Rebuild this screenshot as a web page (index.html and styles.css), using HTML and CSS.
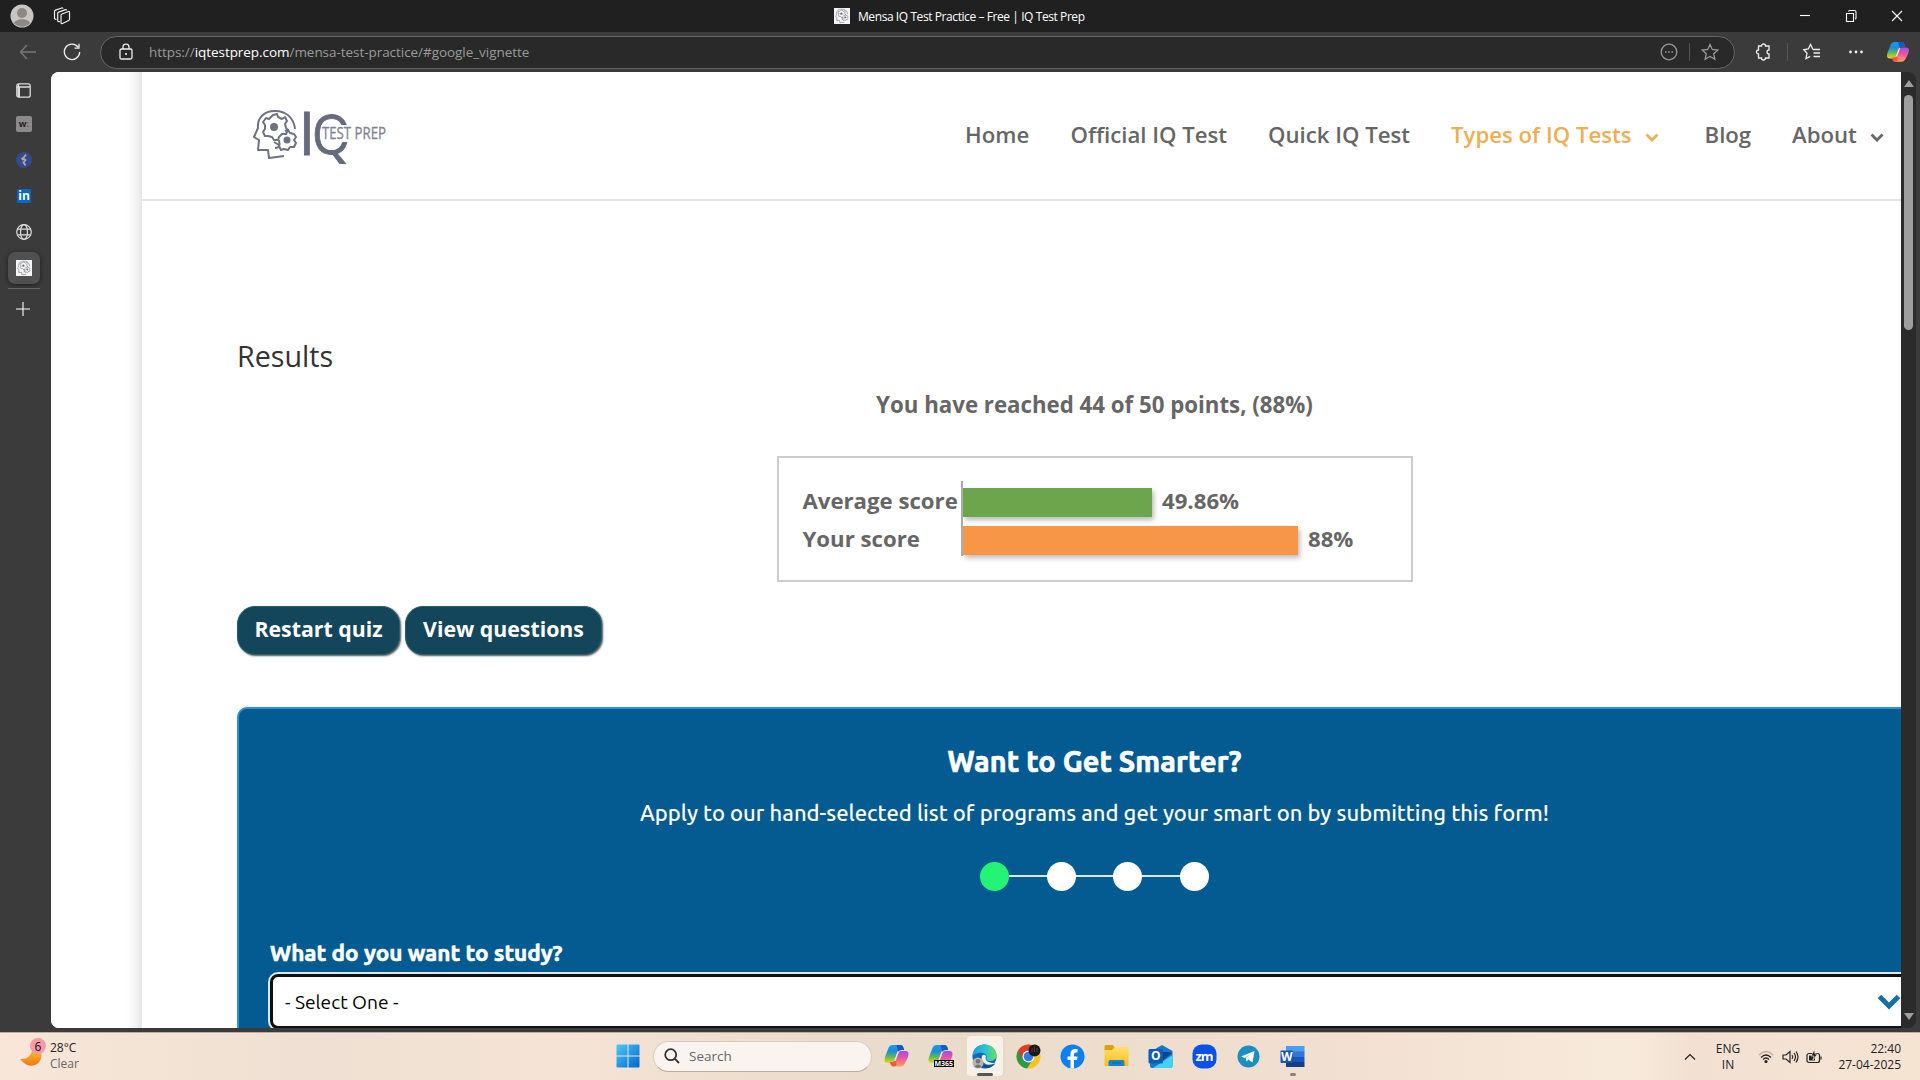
FILE: index.html
```html
<!DOCTYPE html>
<html lang="en">
<head>
<meta charset="utf-8">
<title>Mensa IQ Test Practice – Free | IQ Test Prep</title>
<link rel="stylesheet" href="styles.css">
</head>
<body>
<svg class="defs" aria-hidden="true">
  <defs>
    <linearGradient id="cpBlue" x1="0" y1="0" x2="0" y2="1"><stop offset="0" stop-color="#1a9af0"/><stop offset=".35" stop-color="#1e8bd8"/><stop offset=".65" stop-color="#5cb85a"/><stop offset="1" stop-color="#f5d313"/></linearGradient>
    <linearGradient id="cpPink" x1="0" y1="0" x2="0" y2="1"><stop offset="0" stop-color="#a04be8"/><stop offset=".5" stop-color="#f0589a"/><stop offset="1" stop-color="#fda05a"/></linearGradient>
    <linearGradient id="winBlue" x1="0" y1="0" x2="1" y2="1"><stop offset="0" stop-color="#4cc8f8"/><stop offset="1" stop-color="#0067cf"/></linearGradient>
    <linearGradient id="edgeTop" x1="0" y1="0" x2="1" y2="0"><stop offset="0" stop-color="#249be0"/><stop offset=".55" stop-color="#2cc3d5"/><stop offset="1" stop-color="#6be05a"/></linearGradient>
    <linearGradient id="moon" x1="0" y1="0" x2="0" y2="1"><stop offset="0" stop-color="#f7bd35"/><stop offset="1" stop-color="#ec7619"/></linearGradient>
    <linearGradient id="folder" x1="0" y1="0" x2="0" y2="1"><stop offset="0" stop-color="#ffe06a"/><stop offset="1" stop-color="#fbbc1d"/></linearGradient>
    <symbol id="copilot" viewBox="0 0 24 24">
      <path d="M8 1h8q2 0 2.700 2l1 3h-3.200q-2 0-2.700 2l-3 9q-.7 2-2.700 2H3q-3 0-3-3 0-1 .5-3L4 4q1-3 4-3z" fill="url(#cpBlue)"/>
      <path d="M12 1h4q2 0 2.700 2l1 3h-3.200q-2 0-2.700 2z" fill="#1559c7"/>
      <path d="M16.500 7H21q3 0 3 3 0 1-.5 3L20 20q-1 2.500-4 2.500H9q-2 0-2.700-2L5.600 18H8q2 0 2.700-2l3-7q.8-2 2.800-2z" fill="url(#cpPink)"/>
      <path d="M5.600 18H8q2 0 2.700-2l1.300 5-2 1.500H9q-2 0-2.700-2z" fill="#ee5a3b"/>
      <path d="M13.800 7.500L10.300 17" stroke="#f3e6dc" stroke-width="1.500" fill="none"/>
    </symbol>
    <symbol id="head" viewBox="0 0 46 50">
      <g fill="none" stroke="currentColor" stroke-width="2" stroke-linejoin="round">
        <path d="M31 46l-15 2-1-8H5l1-10-5-3 4-9C4 8 11 1 22 1c11 0 19 7 20 18"/>
        <path d="M20 5l4-1 1 3 4 2 3-2 2 4-2 3 1 4 2 2-2 4-4 0-3 3-1 3h-4l-2-3-4-1-3 0-2-4 2-3 0-4-2-3 3-4 3 1z"/>
        <path d="M32 21l3-1 2 3 4 1 2 3-2 3 2 3-2 4-4 0-2 3-4-1-3 1-2-4M22 38c5 0 5-3 4-8M21 32l5 3"/>
      </g>
      <circle cx="21" cy="17" r="4" fill="currentColor"/><circle cx="34" cy="30" r="3.500" fill="currentColor"/>
    </symbol>
  </defs>
</svg>

<header class="titlebar">
  <svg class="avatar" width="24" height="24" viewBox="0 0 24 24"><circle cx="12" cy="12" r="11.500" fill="#c9c6c2"/><circle cx="12" cy="9" r="5" fill="#8b8885"/><path d="M4 19c2-5 14-5 16 0-4 5-12 5-16 0z" fill="#8b8885"/></svg>
  <svg class="spaces" width="18" height="18" viewBox="0 0 18 18" fill="none" stroke="#eee" stroke-width="1.200" stroke-linejoin="round"><path d="M9 7l6.500-2.500q1-.3 1 .8v7q0 .8-.8 1.200L9.500 16.500Q8 17 8 15.600V8.400Q8 7.400 9 7zM7 14.500Q4.700 15 4.700 13.500V6.500q0-1 1-1.400L12.500 2.600q1-.3 1.200.8M3.500 12.300Q1.500 12.500 1.500 11V4.500q0-1 1-1.400L8.700 1q1-.2 1.200.7"/></svg>
  <div class="tab-title"><svg class="favicon" width="16" height="16" viewBox="-2 -2 50 54"><use href="#head" width="46" height="50"/></svg><span>Mensa IQ Test Practice – Free | IQ Test Prep</span></div>
  <div class="window-buttons">
    <svg width="12" height="12" viewBox="0 0 12 12"><path d="M1 5.500h10"/></svg>
    <svg width="12" height="12" viewBox="0 0 12 12"><path d="M1.500 3.500h7v8h-7zM3.500 1.500q0-1 1-1h5q1.500 0 1.500 1.500v6q0 1-1 1"/></svg>
    <svg width="12" height="12" viewBox="0 0 12 12"><path d="M1 1l10 10M11 1L1 11"/></svg>
  </div>
</header>

<div class="toolbar">
  <svg class="back" width="18" height="16" viewBox="0 0 18 16"><path d="M16 8H.5M7 1L.5 8 7 15"/></svg>
  <svg class="reload" width="18" height="18" viewBox="0 0 18 18"><path d="M15 4A7.700 7.700 0 1 0 16.700 9M16 .8v4.400h-4.500"/></svg>
  <div class="address">
    <svg class="lock" width="14" height="18" viewBox="0 0 14 18"><path d="M2.500 6h9q1.500 0 1.500 1.500v7q0 1.500-1.500 1.500h-9Q1 16 1 14.500v-7Q1 6 2.500 6zM4 6V4q0-2.900 3-2.900T10 4v2"/><circle cx="7" cy="11" r="1" fill="#fff" stroke="none"/></svg>
    <span class="url">https://<b>iqtestprep.com</b>/mensa-test-practice/#google_vignette</span>
    <svg class="more" width="18" height="18" viewBox="0 0 18 18"><circle cx="9" cy="9" r="7.800"/><path d="M5 9h1.600M8.200 9h1.600M11.400 9H13" stroke-width="1.600"/></svg>
    <i class="divider"></i>
    <svg width="18" height="18" viewBox="0 0 18 18"><path d="M9 1.500l2.300 5 5.500.6-4.100 3.700 1.200 5.500L9 13.500l-4.900 2.800 1.200-5.500L1.200 7.100l5.500-.6z"/></svg>
  </div>
  <svg class="ext" width="18" height="18" viewBox="0 0 18 18"><path d="M5 3h2.500a2 2 0 0 1 4 0H15v4a2 2 0 0 0 0 4v4h-3.500a2 2 0 0 1-4 0H4.500v-4a2 2 0 0 1 0-4V3z"/></svg>
  <i class="divider dim"></i>
  <svg class="favs" width="18" height="18" viewBox="0 0 18 18"><path d="M10 6.500L7.500 1.500 5.300 6l-4.500.8 3.200 3.500-1 5.200 4.200-2.200M10 6.500h7M10.500 10H17M10.500 13.500H17"/></svg>
  <svg class="dots" width="16" height="4" viewBox="0 0 16 4"><circle cx="2.500" cy="2" r="1.400"/><circle cx="8" cy="2" r="1.400"/><circle cx="13.500" cy="2" r="1.400"/></svg>
  <svg class="cp" width="22" height="22"><use href="#copilot"/></svg>
</div>

<main class="frame">
  <aside class="rail">
    <div class="slot first"><svg width="15" height="15" viewBox="0 0 15 15"><rect x=".8" y=".8" width="13.400" height="13.400" rx="2" fill="none" stroke="#ddd" stroke-width="1.300"/><path d="M.8 4H14M2.500 1v13" stroke="#ddd" stroke-width="1.300"/><path d="M1.500 4h2.500v10H1.500z" fill="#ddd"/></svg></div>
    <div class="slot"><span class="w-tile">w<em>:</em></span></div>
    <div class="slot"><svg width="16" height="16" viewBox="0 0 16 16"><circle cx="8" cy="8" r="8" fill="#35498c"/><path d="M10 2.500L7 6.500l2.500 1.500-2 2.500 2 3M5.500 6l2 2" fill="none" stroke="#aaa9a6" stroke-width="1.800"/></svg></div>
    <div class="slot"><span class="in-tile">in</span></div>
    <div class="slot"><svg width="16" height="16" viewBox="0 0 16 16" fill="none" stroke="#ddd" stroke-width="1.200"><circle cx="8" cy="8" r="7.300"/><ellipse cx="8" cy="8" rx="3.500" ry="7.300"/><path d="M1.500 5.200h13M1.500 10.800h13"/></svg></div>
    <div class="slot"><div class="active"><svg class="favicon" width="16" height="16" viewBox="-2 -2 50 54"><use href="#head" width="46" height="50"/></svg></div></div>
    <i class="rail-line"></i>
    <svg class="plus" width="16" height="16" viewBox="0 0 16 16"><path d="M8 1v14M1 8h14"/></svg>
  </aside>

  <div class="viewport">
    <div class="gutter"></div>
    <div class="page">
      <div class="site-header">
        <svg class="logo" width="140" height="62" viewBox="0 0 140 62">
          <use href="#head" x="1" y="4" width="46" height="50"/>
          <text class="logo-i" x="46.500" y="49">I</text>
          <text class="logo-q" x="60" y="47.500" textLength="39" lengthAdjust="spacingAndGlyphs">Q</text>
          <rect x="69" y="19" width="68" height="17" fill="#fff"/>
          <text class="logo-t" x="70" y="33" textLength="64" lengthAdjust="spacingAndGlyphs">TEST PREP</text>
        </svg>
        <nav class="nav">
          <a class="n-home">Home</a><a class="n-off">Official IQ Test</a><a class="n-quick">Quick IQ Test</a>
          <a class="n-types current">Types of IQ Tests<svg width="16" height="11" viewBox="0 0 16 11"><path d="M2.500 2.500L8 8l5.500-5.500"/></svg></a>
          <a class="n-blog">Blog</a><a class="n-about">About<svg width="16" height="11" viewBox="0 0 16 11"><path d="M2.500 2.500L8 8l5.500-5.500"/></svg></a>
        </nav>
      </div>
      <section class="content">
        <h4 class="results">Results</h4>
        <p class="points"><span>You have reached 44 of 50 points, (88%)</span></p>
        <div class="scores">
          <div class="names"><span class="avg">Average score</span><span class="your">Your score</span></div>
          <div class="chart">
            <div class="row"><i class="bar green"></i><span>49.86%</span></div>
            <div class="row"><i class="bar orange"></i><span>88%</span></div>
          </div>
        </div>
        <div class="actions"><button class="btn restart">Restart quiz</button><button class="btn view">View questions</button></div>
        <div class="card">
          <h3 class="card-title">Want to Get Smarter?</h3>
          <p class="card-sub">Apply to our hand-selected list of programs and get your smart on by submitting this form!</p>
          <div class="steps"><i class="dot on"></i><i class="link"></i><i class="dot"></i><i class="link"></i><i class="dot"></i><i class="link"></i><i class="dot"></i></div>
          <div class="question"><span>What do you want to study?</span></div>
          <div class="select"><span>- Select One -</span><svg width="24" height="16" viewBox="0 0 24 16"><path d="M2.500 2.500L12 12l9.500-9.500"/></svg></div>
        </div>
      </section>
    </div>
  </div>
  <div class="scroll"><i class="up"></i><i class="thumb"></i><i class="down"></i></div>
</main>

<footer class="taskbar">
  <div class="weather">
    <svg width="28" height="30" viewBox="0 0 28 30"><path d="M2 21q9 1 12-8h9q2 9-4 13-9 5-17-5z" fill="url(#moon)"/><circle cx="20" cy="8" r="8" fill="#f99aa6"/><text class="badge" x="20" y="12.500">6</text></svg>
    <div class="temp"><span>28°C</span><small>Clear</small></div>
  </div>
  <div class="apps">
    <svg class="start" width="24" height="24" viewBox="0 0 24 24" fill="url(#winBlue)"><path d="M.5 1.500q0-1 1-1h10v11H.5zM12.500.5h10q1 0 1 1v10h-11zM.5 12.500h11v11h-10q-1 0-1-1zM12.500 12.500h11v10q0 1-1 1h-10z"/></svg>
    <div class="search"><svg width="16" height="16" viewBox="0 0 16 16"><circle cx="6.700" cy="6.700" r="5.500"/><path d="M10.700 10.700L15 15"/></svg><span>Search</span></div>
    <div class="app"><svg width="25" height="24"><use href="#copilot"/></svg></div>
    <div class="app m365"><svg width="25" height="24"><use href="#copilot"/></svg><b>M365</b></div>
    <div class="app edge"><svg width="25" height="25" viewBox="0 0 25 25"><circle cx="12.500" cy="12.500" r="12" fill="#1069b8"/><path d="M.5 12C1 4 7 .5 12.500.5 20 .5 24.500 6 24.500 11c0 4-3 6-6.500 6-4 0-4.500-2-3-4-1-5-9-6-14.500-1z" fill="url(#edgeTop)"/><path d="M9 12c-2 7 4 12 13 8 2-1 1 0 0 1-5 5-14 4-16-3-.7-3 1-5 3-6z" fill="#0d4a8f"/><path d="M14 12c-3-3-5 0-4 4 2 5 8 6 13 3-5 0-11-1-9-7z" fill="#f5efe6"/><circle cx="6" cy="19" r="5.500" fill="#b8b5b0"/><circle cx="6" cy="17.300" r="2.300" fill="#77736f"/><path d="M2.500 22.500q3.500-4 7 0-3.500 3-7 0z" fill="#77736f"/></svg><i class="mark"></i></div>
    <div class="app"><svg width="25" height="25" viewBox="0 0 25 25"><circle cx="12.500" cy="12.500" r="12" fill="#f9c324"/><path d="M12.500 12.500L2.100 6.500a12 12 0 0 0 8.900 17.900l5-8z" fill="#2a9a48"/><path d="M2.100 6.500A12 12 0 0 1 23 6.500H12.500L7 15z" fill="#df3a2e"/><circle cx="12.500" cy="12.500" r="6" fill="#fff"/><circle cx="12.500" cy="12.500" r="4.800" fill="#317de8"/><circle cx="18.500" cy="6.500" r="6" fill="#1b1918"/><path d="M16 4v4M18.500 2.500V8M21 4v4" stroke="#48433e"/></svg></div>
    <div class="app"><svg width="25" height="25" viewBox="0 0 25 25"><circle cx="12.500" cy="12.500" r="12" fill="#0a80f2"/><path d="M10.500 24.500V16H7.500v-3.500h3V10c0-3.500 2-5 4.500-5h2.500v3.500H16c-1.500 0-2 .7-2 2v2h3.500L17 16h-3v8.500z" fill="#fff"/></svg></div>
    <div class="app"><svg width="25" height="24" viewBox="0 0 25 24"><path d="M.5 2.500q0-1.500 1.500-1.500h7l2 3-2 3H.5z" fill="#dda012"/><path d="M.5 6H8l3-3h12q1.500 0 1.500 1.500v16q0 1.500-1.500 1.500H2q-1.500 0-1.500-1.500z" fill="url(#folder)"/><path d="M4.500 22v-4q0-2 2-2h12q2 0 2 2v4z" fill="#1584c8"/><path d="M8 19h9" stroke="#0b62a0"/></svg></div>
    <div class="app"><svg width="25" height="25" viewBox="0 0 25 25"><path d="M2 8L14 1l10.500 6v15q0 2-2 2H4q-2 0-2-2z" fill="#1479cf"/><path d="M4 8h17l3 1-10 8z" fill="#0b4390"/><path d="M5 24l19.500-13v11q0 2-2 2z" fill="#3fd3f5"/><rect x=".5" y="5" width="14.500" height="14.500" rx="1.500" fill="#0e5bb5"/><text class="tile-letter" x="7.800" y="16.300">O</text></svg></div>
    <div class="app"><svg width="25" height="25" viewBox="0 0 25 25"><rect x=".5" y=".5" width="24" height="24" rx="9" fill="#0b50e8"/><text class="tile-letter zm" x="12.500" y="16.800" textLength="18">zm</text></svg></div>
    <div class="app"><svg width="23" height="23" viewBox="0 0 23 23"><circle cx="11.500" cy="11.500" r="11" fill="#1b8fc4"/><path d="M4 11.500L17.500 6 15.500 17.500l-4-3-2 2-.8-3.800L14 9l-6.500 4z" fill="#fff"/></svg></div>
    <div class="app word"><svg width="25" height="23" viewBox="0 0 25 23"><path d="M6 1h18.500v6H6z" fill="#4a9df0"/><path d="M6 6.500h18.500V12H6z" fill="#2c78d4"/><path d="M6 12h18.500v5H6z" fill="#1859b8"/><path d="M6 17h18.500v5H6z" fill="#123e85"/><rect x=".5" y="5.500" width="12.500" height="12.500" rx="1" fill="#1a55ad"/><text class="tile-letter" x="6.700" y="16">W</text></svg><i class="mark small"></i></div>
  </div>
  <div class="tray">
    <svg class="chev" width="12" height="8" viewBox="0 0 12 8"><path d="M1 6.500l5-5 5 5"/></svg>
    <div class="lang"><span>ENG</span><span>IN</span></div>
    <svg class="wifi" width="16" height="14" viewBox="0 0 16 14"><path d="M1 5q7-7 14 0" stroke="#b9aa9e"/><path d="M3 7.500q5-5 10 0M5 9.500q3-3 6 0"/><circle cx="8" cy="11.500" r="1" fill="#222"/></svg>
    <svg class="sound" width="17" height="14" viewBox="0 0 17 14"><path d="M1 5h3l4-3.500v11L4 9H1zM10 5q1.500 2 0 4M12 3q3 4 0 8M14 1.500q4 5.500 0 11"/></svg>
    <svg class="power" width="16" height="14" viewBox="0 0 16 14"><rect x="1" y="3.500" width="12.500" height="9" rx="2"/><path d="M3 5.500h6v5H3z" fill="#222" stroke="none"/><path d="M15 6.500v3"/><path d="M8.500-.5L5 6h3l-1 4 4.500-6H9z" fill="#222" stroke="#f6e5d4" stroke-width=".7"/></svg>
    <div class="clock"><span>22:40</span><span>27-04-2025</span></div>
  </div>
</footer>
</body>
</html>
```
FILE: styles.css
```css
* { box-sizing: border-box; }
body { margin: 0; width: 1920px; height: 1080px; overflow: hidden; display: grid; grid-template-rows: 32px 40px 960px 48px; background: #3b3b3b; font-family: "Open Sans", "Noto Sans", sans-serif; }
svg { display: block; flex: none; overflow: visible; }
.defs { position: absolute; width: 0; height: 0; }
h3, h4, p { margin: 0; }
.favicon { background: #f5f5f5; color: #70747c; }

/* Window title bar */
.titlebar { background: #202020; display: grid; grid-template-columns: 44px 500px 1fr auto; align-items: center; padding-left: 10px; color: #fff; }
.spaces { margin-left: -1px; }
.tab-title { display: flex; align-items: center; gap: 8px; margin-left: 280px; font-size: 12px; white-space: nowrap; }
.tab-title span { letter-spacing: -.42px; }
.window-buttons { display: flex; gap: 34px; padding-right: 17px; }
.window-buttons svg, .plus { fill: none; stroke: #fff; stroke-width: 1.1; }

/* Navigation toolbar */
.toolbar { display: flex; align-items: center; padding-left: 20px; fill: none; stroke: #eee; stroke-width: 1.3; }
.back { stroke: #777; }
.reload { margin-left: 25px; }
.address { width: 1635px; height: 33px; margin-left: 19px; border: 1px solid #666; border-radius: 17px; background: #292929; display: flex; align-items: center; padding: 0 15px 0 18px; }
.url { margin-left: 16px; font-size: 13.5px; letter-spacing: -.05px; color: #9a9a9a; }
.url b { font-weight: 400; color: #fff; }
.more { margin-left: auto; }
.address .more, .address .more ~ svg { stroke: #999; }
.divider { width: 1px; height: 18px; background: #555; margin: 0 11px; }
.ext { margin-left: 19px; }
.dim { margin: 0 15px 0 15px; }
.dots { margin-left: 27px; fill: #eee; stroke: none; }
.cp { margin-left: 23px; stroke: none; }

/* Vertical tab rail */
.frame { display: grid; grid-template-columns: 51px 1850px 15px; grid-template-rows: 956px; }
.rail { display: flex; flex-direction: column; padding-left: 8px; }
.slot { width: 32px; height: 36px; display: grid; place-items: center; }
.slot.first { height: 34px; padding: 2px 2px 0 0; }
.w-tile { width: 16px; height: 16px; background: #8a8a8a; border-radius: 2px; color: #222; font: 700 9px/15px "Open Sans", sans-serif; text-align: center; }
.w-tile em { color: #b33; font-style: normal; }
.in-tile { width: 14px; height: 14px; background: #0a66c2; border-radius: 1px; color: #fff; font: 700 12px/14px "Open Sans", sans-serif; text-align: center; }
.active { width: 32px; height: 32px; border-radius: 7px; background: #505050; box-shadow: 0 1px 4px #1c1c1c; display: grid; place-items: center; }
.rail-line { width: 32px; height: 1px; background: #666; margin-top: 2px; }
.plus { margin: 12px 0 0 7px; }

/* Scrollbar */
.scroll { background: #2b2b2b; border-radius: 0 8px 8px 0; display: flex; flex-direction: column; align-items: center; }
.up { border: 5px solid transparent; border-top: 0; border-bottom: 7px solid #9e9e9e; margin-top: 8px; }
.thumb { width: 9px; height: 235px; border-radius: 5px; background: #9e9e9e; margin-top: 8px; }
.down { border: 5px solid transparent; border-bottom: 0; border-top: 7px solid #9e9e9e; margin: auto 0 8px; }

/* Web page */
.viewport { background: #fefefe; border-radius: 8px 0 0 8px; overflow: hidden; display: grid; grid-template-columns: 91px 1fr; }
.gutter { background: linear-gradient(to right, #fff 82%, #f6f6f6 92%, #e6e6e6); }
.page { background: #fff; min-width: 0; }
.site-header { height: 129px; border-bottom: 2px solid #e4e4e4; display: flex; }
.logo { margin: 34px 0 0 110px; color: #6e7280; }
.logo text { fill: #666a7e; font-family: "Open Sans", sans-serif; }
.logo .logo-i, .logo .logo-q { stroke: #666a7e; stroke-width: .8; }
.logo .logo-i { font-size: 60px; }
.logo .logo-q { font-size: 55px; }
.logo .logo-t { font-size: 17px; fill: #80838f; stroke: #80838f; stroke-width: .3; }
.nav { display: flex; height: 36px; margin: 45px 0 0 573px; line-height: 36px; font-size: 22.2px; font-weight: 600; color: #666; white-space: nowrap; }
.nav a { display: flex; align-items: center; }
.nav svg { fill: none; stroke: currentColor; stroke-width: 2.8; margin: 5px 0 0 12px; }
.n-home { width: 105.500px; }
.n-off { width: 197.500px; }
.n-quick { width: 183px; }
.n-types { width: 253.500px; }
.n-blog { width: 87.500px; }
.current { color: #eeae53; }

.content { width: 1715px; margin-left: 95px; padding-top: 135px; }
.results { font-size: 28.7px; line-height: 40px; font-weight: 400; color: #333; }
.points { margin-top: 9px; text-align: center; font-size: 22.25px; line-height: 40px; font-weight: 700; color: #666; }
.scores { width: 636px; height: 126px; margin: 31px auto 0; border: 2px solid #ccc; display: flex; padding: 23px 0 0 24px; font-size: 22.2px; font-weight: 700; color: #666; }
.names { width: 158px; padding-top: 1px; display: flex; flex-direction: column; line-height: 38px; white-space: nowrap; }
.chart { height: 75px; border-left: 2px solid #aaa; }
.row { display: flex; align-items: center; gap: 10px; height: 38px; line-height: 38px; }
.row span { margin-top: 2px; }
.bar { height: 29px; margin-top: 5px; box-shadow: 2px 3px 5px #bbb; }
.green { width: 189.500px; background: #6ca54b; }
.orange { width: 335.500px; background: #f89648; }
.actions { display: flex; gap: 5px; margin-top: 24px; }
.btn { height: 49px; padding: 0 0 4px; border: 1px solid #286073; border-radius: 18px; background: #13455b; color: #fff; font: 700 21.3px "Open Sans", sans-serif; box-shadow: 1px 1px 2px #555; white-space: nowrap; }
.restart { width: 163px; }
.view { width: 197px; }

/* Programme form */
.card { height: 420px; margin-top: 52px; border: 2px solid #2a93dc; border-radius: 10px 0 0 0; background: #045b92; color: #fff; font-family: Ubuntu, "Noto Sans", sans-serif; padding: 32px 0 0 31px; }
.card-title { margin-left: -31px; text-align: center; font-size: 28.8px; line-height: 40px; font-weight: 700; -webkit-text-stroke: .7px #fff; letter-spacing: .12px; }
.card-sub { margin: 12px 0 0 -31px; text-align: center; font-size: 22px; line-height: 40px; font-weight: 500; white-space: nowrap; }
.steps { display: flex; align-items: center; justify-content: center; margin: 29px 0 0 -31px; }
.dot { width: 29px; height: 29px; border-radius: 50%; background: #fff; }
.on { background: #24f475; }
.link { width: 37.7px; height: 2px; margin-bottom: 2px; background: #dce9f1; }
.question { margin-top: 42px; font-size: 22.5px; line-height: 40px; font-weight: 700; -webkit-text-stroke: .6px #fff; }
.select { width: 1638px; height: 55px; margin-top: 1px; border: 3px solid #111; outline: 2px solid #dde6eb; border-radius: 8px 0 0 8px; background: #fff; color: #000; font-size: 19.2px; display: flex; align-items: center; justify-content: space-between; padding-left: 12px; }
.select svg { fill: none; stroke: #176fa6; stroke-width: 5; margin-right: 4px; }

/* Taskbar */
.taskbar { background: linear-gradient(to right, #f8e7d8, #efe0d3 16%, #f5e4d5 30%, #ebdccb 42%, #eadccb 50%, #f1dfd0 68%, #f8eadb 85%, #f2e1d3 88%, #f6e4d2); border-top: 1px solid #b9aca2; display: grid; grid-template-columns: 616px 1064px 240px; font-size: 12px; color: #222; }
.weather { display: flex; padding: 5px 0 0 18px; }
.badge { font: 12px "Open Sans", sans-serif; fill: #111; text-anchor: middle; }
.temp, .clock, .lang { display: flex; flex-direction: column; line-height: 16px; }
.temp { margin: 2px 0 0 4px; }
.temp small { font-size: 12px; color: #666; }
.apps { display: flex; align-items: center; padding-bottom: 1px; }
.search { width: 219px; height: 31px; margin: 0 2px 0 13px; border-radius: 16px; background: #f9f4ef; border: 1px solid #dccdbf; border-bottom-color: #b9aca0; display: flex; align-items: center; gap: 9px; padding-left: 10px; font-size: 13.500px; color: #666; }
.search svg { fill: none; stroke: #333; stroke-width: 1.800; }
.app { width: 44px; height: 40px; display: grid; place-items: center; position: relative; left: .5px; }
.edge { width: 36px; margin: 0 4px; background: #f8f1e8; border-radius: 4px; box-shadow: 1px 0 0 1px #e5d9ca; }
.mark { position: absolute; bottom: 0; width: 16px; height: 3px; border-radius: 2px; background: #555; }
.mark.small { width: 6px; background: #8c8178; }
.m365 b { position: absolute; left: 15px; top: 24px; background: #000; color: #fff; font-size: 7px; line-height: 7px; padding: 0 1px; }
.tile-letter { font: 700 12px "Open Sans", sans-serif; fill: #fff; text-anchor: middle; }
.zm { font-size: 13px; }
.tray { display: flex; align-items: center; fill: none; stroke: #222; stroke-width: 1.200; padding-left: 4px; }
.lang { width: 40px; margin-left: 12px; text-align: center; }
.wifi { margin-left: 10px; }
.sound { margin-left: 8px; }
.power { margin-left: 7px; }
.clock { margin: 0 19px 0 auto; text-align: right; }
```
